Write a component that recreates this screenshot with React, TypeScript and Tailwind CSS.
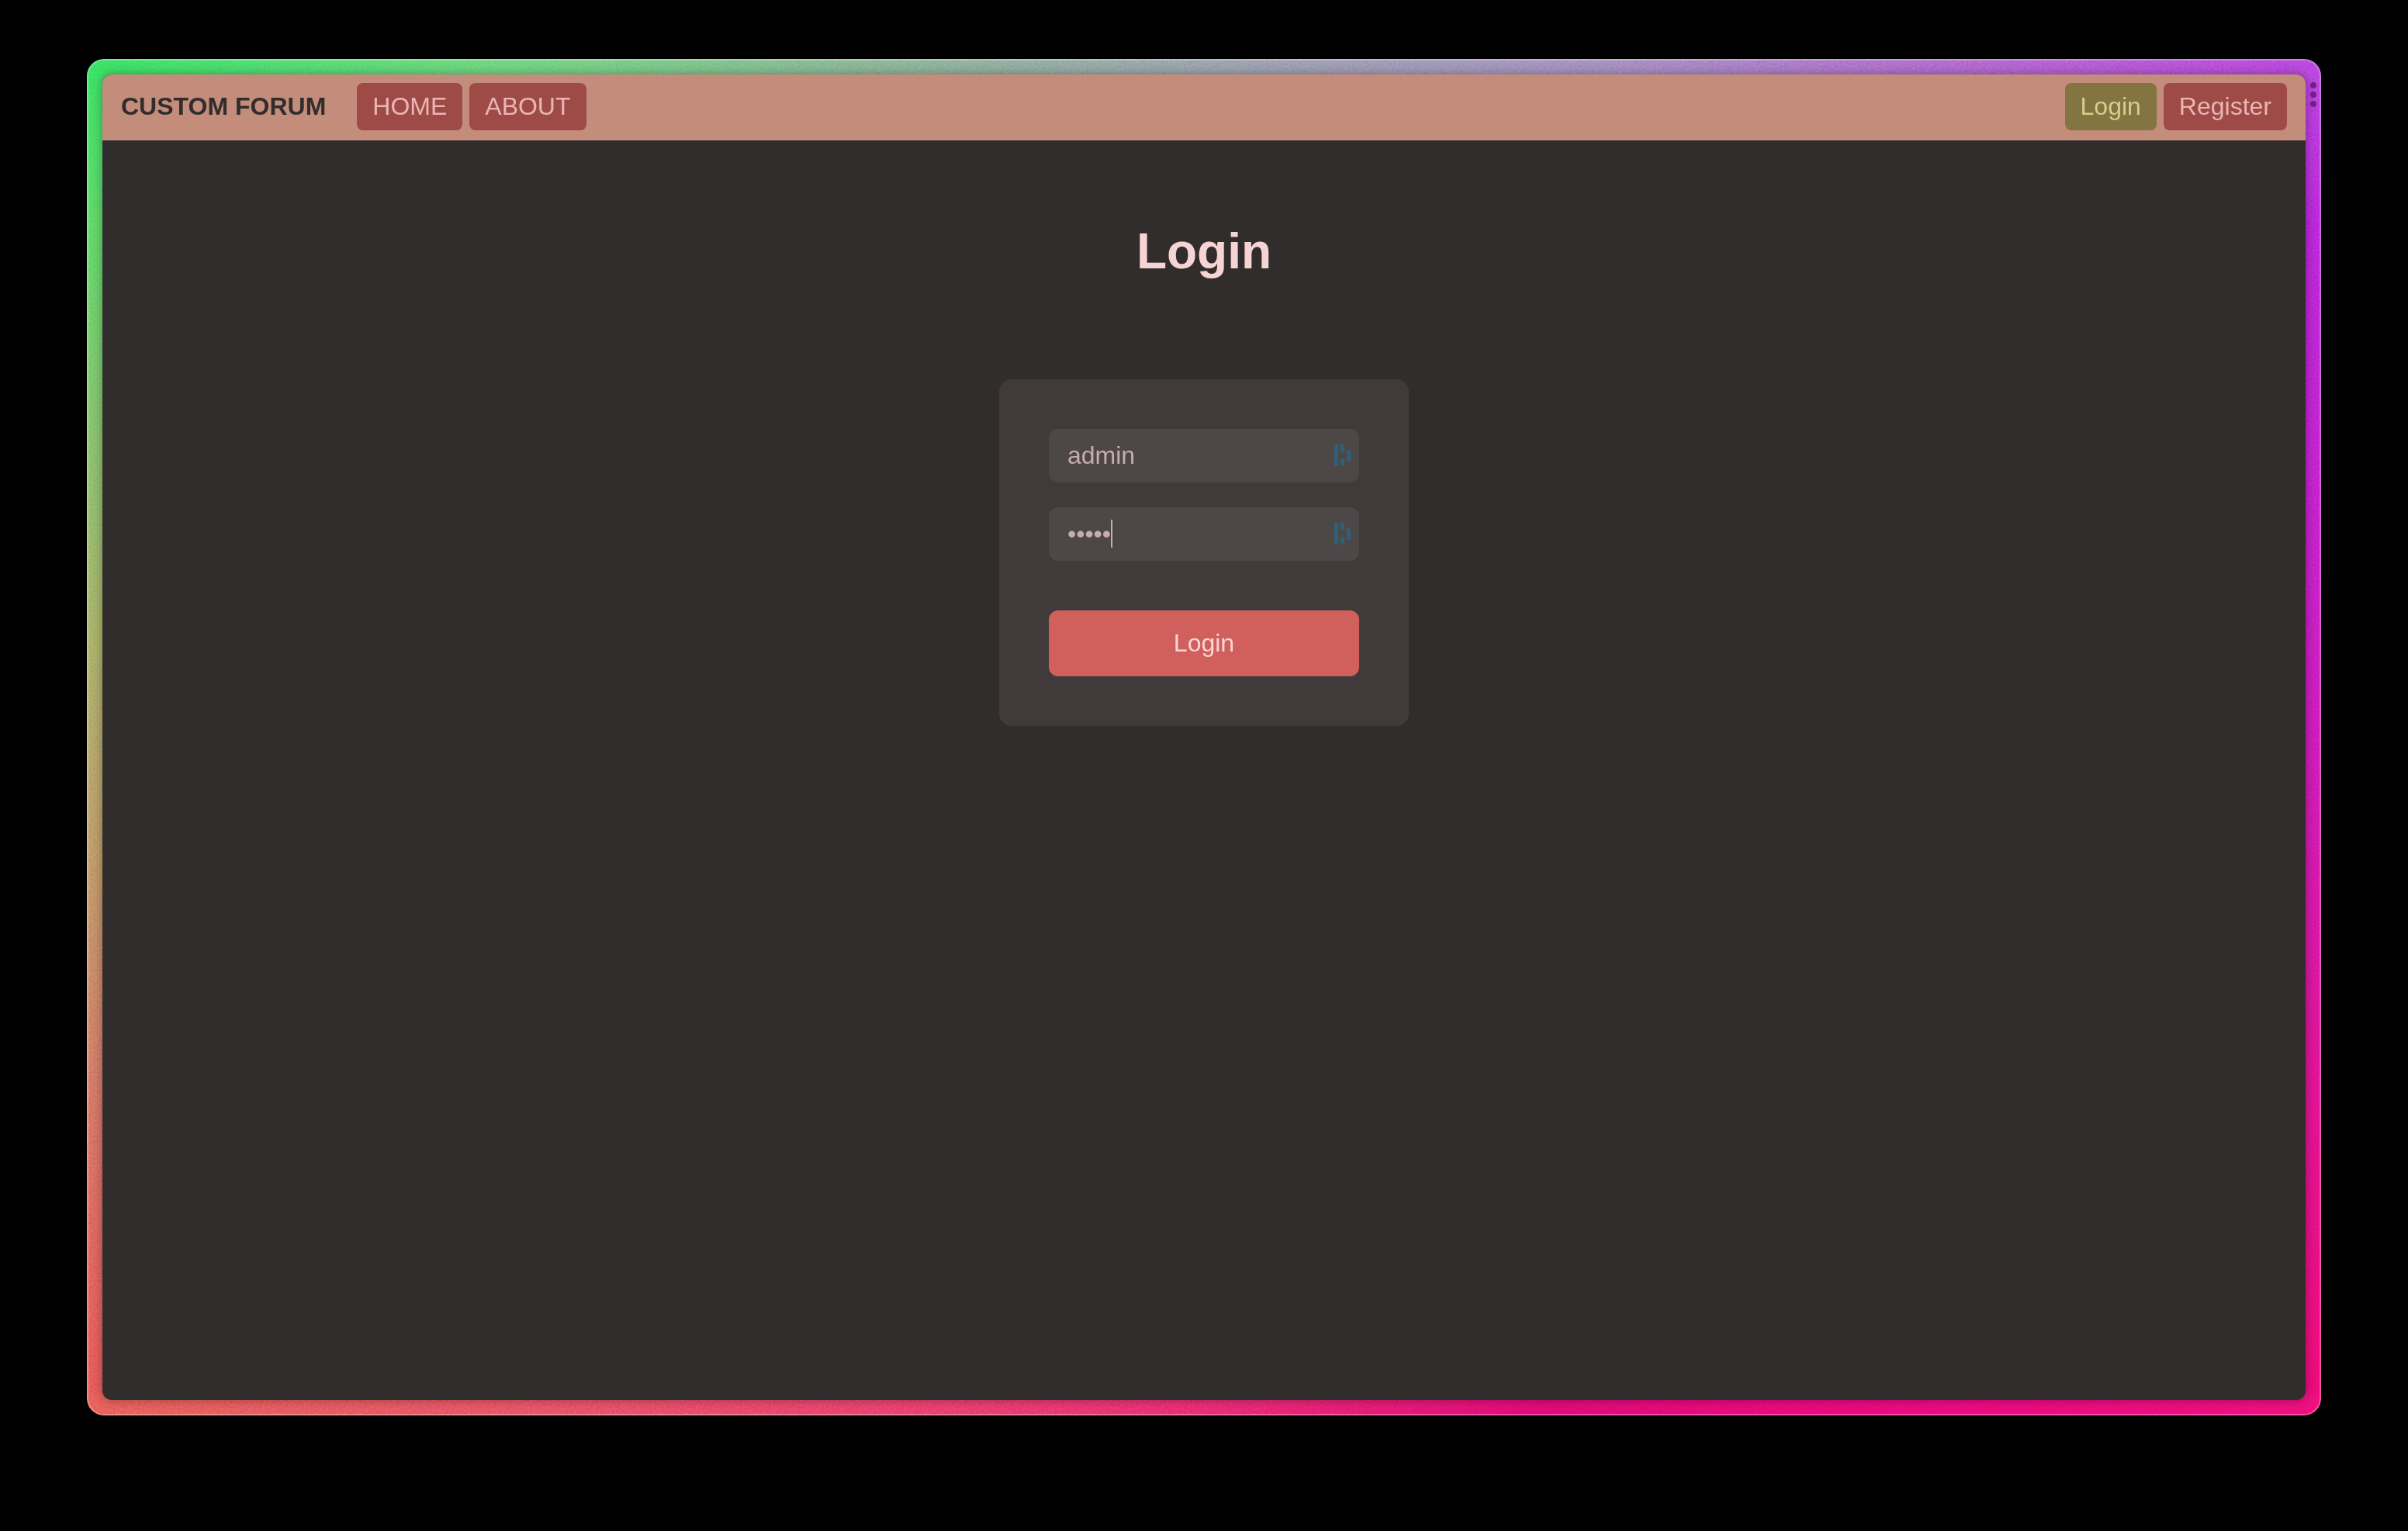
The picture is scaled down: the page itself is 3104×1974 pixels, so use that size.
import React from "react";

const font = "font-['Liberation_Sans',Arial,sans-serif]";

function VaultIcon() {
  return (
    <svg viewBox="0 0 21 30" className="pointer-events-none absolute right-[11px] top-[19px] h-[30px] w-[21px]" fill="#2c6276" aria-hidden="true">
      <path d="M0.5 0.3 L4 1 Q5 1.3 5 2.3 V28.6 Q5 29.8 3.8 29.5 L0 28.5 V0.8 Q0 0.2 0.5 0.3Z" />
      <path d="M8.4 0.5 L12 1.4 Q13 1.7 13 2.8 V11.2 L8 10 V1 Q8 0.4 8.4 0.5Z" />
      <path d="M8 18.6 L13 19.8 V27.8 Q13 28.9 12 28.7 L8 27.7Z" />
      <path d="M16.4 8 L20 8.9 Q21 9.2 21 10.2 V22.4 Q21 23.5 20 23.3 L16 22.3 V8.6 Q16 7.9 16.4 8Z" />
    </svg>
  );
}

function Grain() {
  return (
    <svg className="absolute inset-0 size-full opacity-40 mix-blend-soft-light" aria-hidden="true">
      <filter id="grain" colorInterpolationFilters="sRGB">
        <feTurbulence type="fractalNoise" baseFrequency="0.35" numOctaves="2" />
        <feColorMatrix type="matrix" values="1 0 0 0 0 0 1 0 0 0 0 0 1 0 0 0 0 0 0 1" />
      </filter>
      <rect width="100%" height="100%" filter="url(#grain)" />
    </svg>
  );
}

// One gradient per edge of the window frame: top, bottom, left, right.
const frameEdges =
  "bg-[linear-gradient(90deg,#3ae368_0%,#72d783_18%,#8fb89a_35%,#9ea6b0_50%,#a893c2_68%,#b56ad0_85%,#bd48e0_100%),linear-gradient(90deg,#e8645c_0%,#e9566a_20%,#ea3f74_40%,#ea2d78_50%,#e30a7c_65%,#ee0a84_85%,#ee1080_100%),linear-gradient(180deg,#3ae368_0%,#62da6c_12%,#8cc470_28%,#adb46c_43%,#c0a06c_58%,#d4806a_74%,#e26860_88%,#ea5c5c_100%),linear-gradient(180deg,#bd48e0_0%,#bd28dc_12%,#c623d2_30%,#d01cbe_50%,#dc16a4_68%,#e8108c_85%,#f00a7c_100%)] bg-[length:100%_28px,100%_28px,32px_100%,32px_100%] bg-[position:0_0,0_100%,0_0,100%_0] bg-no-repeat";

const navButton = "rounded-lg px-5 py-3 leading-[37px]";
const field = "h-[69px] w-full rounded-xl bg-[#4e4747] px-6 text-[#c4adac] caret-transparent outline-none";

export default function App() {
  return (
    <div className={`min-h-screen bg-black px-28 pt-[76px] pb-[149px] text-[32px] ${font} flex`}>
      <div className={`relative flex flex-1 overflow-hidden rounded-[22px] p-5 ${frameEdges}`}>
        <Grain />
        <div className="absolute inset-0 rounded-[22px] border-2 border-white/30" />
        <div className="absolute right-[6px] top-[30px] flex flex-col gap-1" aria-hidden="true">
          <span className="size-2 rounded-full bg-[#74228a]" />
          <span className="size-2 rounded-full bg-[#74228a]" />
          <span className="size-2 rounded-full bg-[#74228a]" />
        </div>
        <div className="relative flex flex-1 flex-col overflow-hidden rounded-xl bg-[#312d2c] shadow-[0_0_14px_rgba(0,0,0,0.35)]">
          <header className="flex items-start justify-between bg-[#c48c7a] px-6 pt-[11px] pb-[13px]">
            <div className="flex items-center gap-10">
              <a href="#" className="font-bold leading-[37px] text-[#312d2c]">CUSTOM FORUM</a>
              <nav className="flex gap-[9px] text-[#eab5b5]">
                <a href="#home" className={`${navButton} bg-[#9e4a46]`}>HOME</a>
                <a href="#about" className={`${navButton} bg-[#9e4a46]`}>ABOUT</a>
              </nav>
            </div>
            <nav className="flex gap-[9px]">
              <a href="#login" className={`${navButton} bg-[#827541] text-[#d8cc8c]`}>Login</a>
              <a href="#register" className={`${navButton} bg-[#9e4a46] text-[#eab5b5]`}>Register</a>
            </nav>
          </header>
          <main className="flex flex-col items-center pt-[106px]">
            <h1 className="text-[64px] font-bold leading-[74px] text-[#f7d4d4]">Login</h1>
            <form className="mt-32 flex w-[528px] flex-col rounded-2xl bg-[#403a3a] p-16" onSubmit={(e) => e.preventDefault()}>
              <div className="relative">
                <input type="text" aria-label="Username" defaultValue="admin" className={field} />
                <VaultIcon />
              </div>
              <div className="relative mt-8">
                <input type="password" aria-label="Password" defaultValue="admin" className={field} />
                <span className="absolute left-20 top-4 h-9 w-0.5 bg-[#c4adac]" aria-hidden="true" />
                <VaultIcon />
              </div>
              <button type="submit" className="mt-16 rounded-xl bg-[#d1605d] py-6 leading-[37px] text-[#f9d5d5]">Login</button>
            </form>
          </main>
        </div>
      </div>
    </div>
  );
}
